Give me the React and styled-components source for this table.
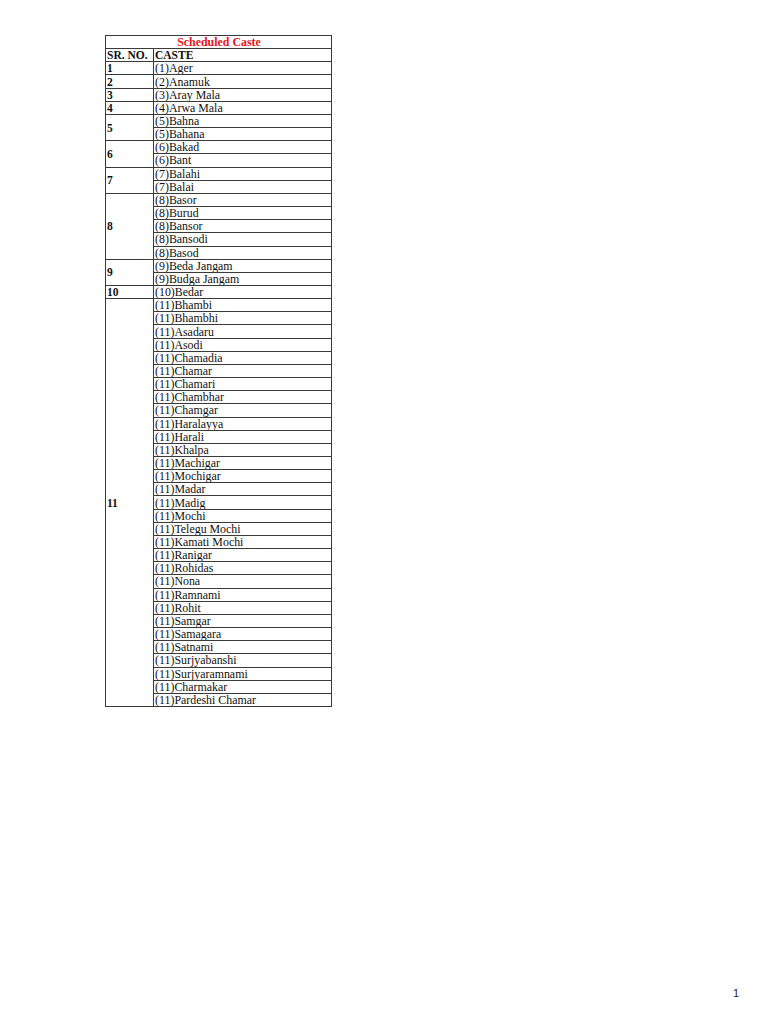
import React from "react";
import styled, { createGlobalStyle } from "styled-components";

const Global = createGlobalStyle`
  html, body { margin: 0; padding: 0; background: #fff; }
`;

const Page = styled.div`
  width: 768px;
  height: 1024px;
  box-sizing: border-box;
  padding: 35px 0 0 105px;
  display: flex;
  flex-direction: column;
  font-family: "Liberation Serif", "Times New Roman", serif;
  color: #111;
`;

const Table = styled.table`
  border-collapse: collapse;
  width: 227px;
  table-layout: fixed;
  font-size: 11.9px;
  line-height: 12px;
`;

const Cell = styled.td`
  border: 1px solid #3a3a3a;
  padding: 0 0 0 1px;
  height: 12.16px;
  white-space: nowrap;
  overflow: hidden;
  vertical-align: middle;
  font-weight: ${(p) => (p.$bold ? 700 : 400)};
  font-size: ${(p) => (p.$bold && !p.$red ? "11.5px" : "11.9px")};
  text-align: ${(p) => (p.$center ? "center" : "left")};
  color: ${(p) => (p.$red ? "#e8141b" : "#111")};
`;

const Footer = styled.div`
  margin-top: auto;
  align-self: flex-end;
  margin-right: 29px;
  margin-bottom: 25px;
  font-family: "Liberation Sans", Arial, sans-serif;
  font-size: 11px;
  color: #222;
`;

const groups = [
  ["1", ["Ager"]],
  ["2", ["Anamuk"]],
  ["3", ["Aray Mala"]],
  ["4", ["Arwa Mala"]],
  ["5", ["Bahna", "Bahana"]],
  ["6", ["Bakad", "Bant"]],
  ["7", ["Balahi", "Balai"]],
  ["8", ["Basor", "Burud", "Bansor", "Bansodi", "Basod"]],
  ["9", ["Beda Jangam", "Budga Jangam"]],
  ["10", ["Bedar"]],
  [
    "11",
    [
      "Bhambi", "Bhambhi", "Asadaru", "Asodi", "Chamadia", "Chamar", "Chamari",
      "Chambhar", "Chamgar", "Haralayya", "Harali", "Khalpa", "Machigar",
      "Mochigar", "Madar", "Madig", "Mochi", "Telegu Mochi", "Kamati Mochi",
      "Ranigar", "Rohidas", "Nona", "Ramnami", "Rohit", "Samgar", "Samagara",
      "Satnami", "Surjyabanshi", "Surjyaramnami", "Charmakar", "Pardeshi Chamar",
    ],
  ],
];

export default function App() {
  return (
    <>
      <Global />
      <Page>
        <Table>
          <colgroup>
            <col style={{ width: "48px" }} />
            <col />
          </colgroup>
          <tbody>
            <tr>
              <Cell colSpan={2} $center $bold $red>Scheduled Caste</Cell>
            </tr>
            <tr>
              <Cell $bold>SR. NO.</Cell>
              <Cell $bold>CASTE</Cell>
            </tr>
            {groups.map(([n, names]) =>
              names.map((name, i) => (
                <tr key={n + name}>
                  {i === 0 && (
                    <Cell $bold rowSpan={names.length}>{n}</Cell>
                  )}
                  <Cell>({n}){name}</Cell>
                </tr>
              ))
            )}
          </tbody>
        </Table>
        <Footer>1</Footer>
      </Page>
    </>
  );
}
